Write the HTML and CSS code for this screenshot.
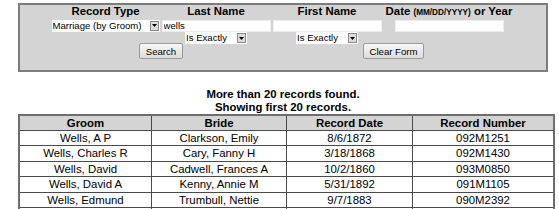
FILE: index.html
```html
<!DOCTYPE html>
<html lang="en">
<head>
    <meta charset="UTF-8">
    <title>Vital Records Search</title>
    <link rel="stylesheet" href="styles.css">
</head>
<body>
    <!-- search form -->
    <form class="search-box" id="searchForm">
        <div class="search-grid">
            <div class="label">Record Type</div>
            <div class="label">Last Name</div>
            <div class="label">First Name</div>
            <div class="label">Date <span class="hint">(MM/DD/YYYY)</span> or Year</div>

            <div class="cell">
                <span class="pick">
                    <select class="type-select">
                        <option>Marriage (by Groom)</option>
                        <option>Marriage (by Bride)</option>
                        <option>Birth</option>
                        <option>Death</option>
                    </select>
                    <span class="drop"><svg width="5" height="3" viewBox="0 0 5 3"><path d="M0 0H5L2.5 3Z" fill="#000"/></svg></span>
                </span>
            </div>
            <div class="cell"><input type="text" class="field" value="wells"></div>
            <div class="cell"><input type="text" class="field"></div>
            <div class="cell"><input type="text" class="field"></div>

            <div class="cell"></div>
            <div class="cell">
                <span class="pick">
                    <select class="match-select"><option>Is Exactly</option><option>Starts With</option><option>Sounds Like</option></select>
                    <span class="drop"><svg width="5" height="3" viewBox="0 0 5 3"><path d="M0 0H5L2.5 3Z" fill="#000"/></svg></span>
                </span>
            </div>
            <div class="cell">
                <span class="pick">
                    <select class="match-select"><option>Is Exactly</option><option>Starts With</option><option>Sounds Like</option></select>
                    <span class="drop"><svg width="5" height="3" viewBox="0 0 5 3"><path d="M0 0H5L2.5 3Z" fill="#000"/></svg></span>
                </span>
            </div>
            <div class="cell"></div>

            <div class="cell span2"><button type="submit" class="btn">Search</button></div>
            <div class="cell span2"><button type="reset" class="btn">Clear Form</button></div>
        </div>
    </form>

    <div class="message">
        More than 20 records found.<br>
        Showing first 20 records.
    </div>

    <table class="results">
        <thead>
            <tr>
                <th class="c1">Groom</th>
                <th class="c2">Bride</th>
                <th class="c3">Record Date</th>
                <th class="c4">Record Number</th>
            </tr>
        </thead>
        <tbody id="rows"></tbody>
    </table>

    <script>
        // resultados de la busqueda
        const records = [
            ['Wells, A P', 'Clarkson, Emily', '8/6/1872', '092M1251'],
            ['Wells, Charles R', 'Cary, Fanny H', '3/18/1868', '092M1430'],
            ['Wells, David', 'Cadwell, Frances A', '10/2/1860', '093M0850'],
            ['Wells, David A', 'Kenny, Annie M', '5/31/1892', '091M1105'],
            ['Wells, Edmund', 'Trumbull, Nettie', '9/7/1883', '090M2392'],
            ['Wells, Edward', 'Brown, Mary', '4/12/1879', '090M1187']
        ];

        const rows = document.getElementById('rows');
        records.forEach(r => {
            rows.innerHTML += `<tr><td>${r[0]}</td><td>${r[1]}</td><td>${r[2]}</td><td>${r[3]}</td></tr>`;
        });
    </script>
</body>
</html>
```
FILE: styles.css
```css
/* Estilos */
body {
    font-family: "Liberation Sans", Arial, sans-serif;
    font-size: 11.4px;
    color: #000;
    background-color: #fff;
    margin: 0;
    padding: 0;
}

.search-box {
    width: 530px;
    height: 69px;
    box-sizing: border-box;
    margin: 3px 0 0 18px;
    background-color: #d4d4d4;
    border: 2px solid #7c7c7c;
}

.search-grid {
    display: grid;
    grid-template-columns: 110px 111px 111px 133px;
    grid-template-rows: 13px 12px 12px 16px;
    row-gap: 0;
    justify-content: center;
}

.label {
    font-weight: bold;
    text-align: center;
    line-height: 13px;
    white-space: nowrap;
}

.hint {
    font-size: 8.2px;
}

.cell {
    display: flex;
    justify-content: center;
    align-items: center;
}

/* filas: separacion vertical */
.search-grid > :nth-child(n+5) {
    margin-top: 3px;
}
.search-grid > :nth-child(n+9) {
    margin-top: 4px;
}
.search-grid > :nth-child(n+13) {
    margin-top: 2px;
}

.span2 {
    grid-column: span 2;
}

.field {
    width: 109px;
    height: 12px;
    box-sizing: border-box;
    border: 1px solid #ececec;
    background-color: #fff;
    font-family: inherit;
    font-size: 9.6px;
    padding: 0 1px;
    margin: 0;
    outline: none;
}

.pick {
    display: inline-flex;
    align-items: center;
    height: 12px;
    background-color: #fff;
}

.pick select {
    appearance: none;
    -webkit-appearance: none;
    border: none;
    background: #fff;
    height: 12px;
    font-family: inherit;
    font-size: 9.6px;
    line-height: 12px;
    padding: 0 0 0 1px;
    margin: 0;
    color: #000;
    outline: none;
}

.type-select {
    width: 97px;
}

.match-select {
    width: 51px;
}

.drop {
    display: inline-flex;
    align-items: center;
    justify-content: center;
    width: 7px;
    height: 8px;
    margin: 0 1px 0 1px;
    background-color: #dcdcdc;
    border: 1px solid #8a8a8a;
}

.btn {
    height: 16px;
    padding: 0 6px;
    font-family: inherit;
    font-size: 9.6px;
    color: #000;
    background: linear-gradient(#f8f8f8, #dcdcdc);
    border: 1px solid #9a9a9a;
    border-radius: 2px;
    cursor: pointer;
}

.message {
    margin-top: 16px;
    width: 530px;
    margin-left: 18px;
    text-align: center;
    font-weight: bold;
    line-height: 13px;
}

.results {
    margin-left: 18px;
    width: 530px;
    border-collapse: collapse;
    border: 2px solid #6e6e6e;
    table-layout: fixed;
}

.results th,
.results td {
    border: 1px solid #4a4a4a;
    padding: 0;
    text-align: center;
    white-space: nowrap;
}

.results th {
    background-color: #d4d4d4;
    line-height: 14px;
}

.results td {
    line-height: 14.4px;
}

.c1 { width: 131px; }
.c2 { width: 134px; }
.c3 { width: 125px; }
.c4 { width: 140px; }
```
